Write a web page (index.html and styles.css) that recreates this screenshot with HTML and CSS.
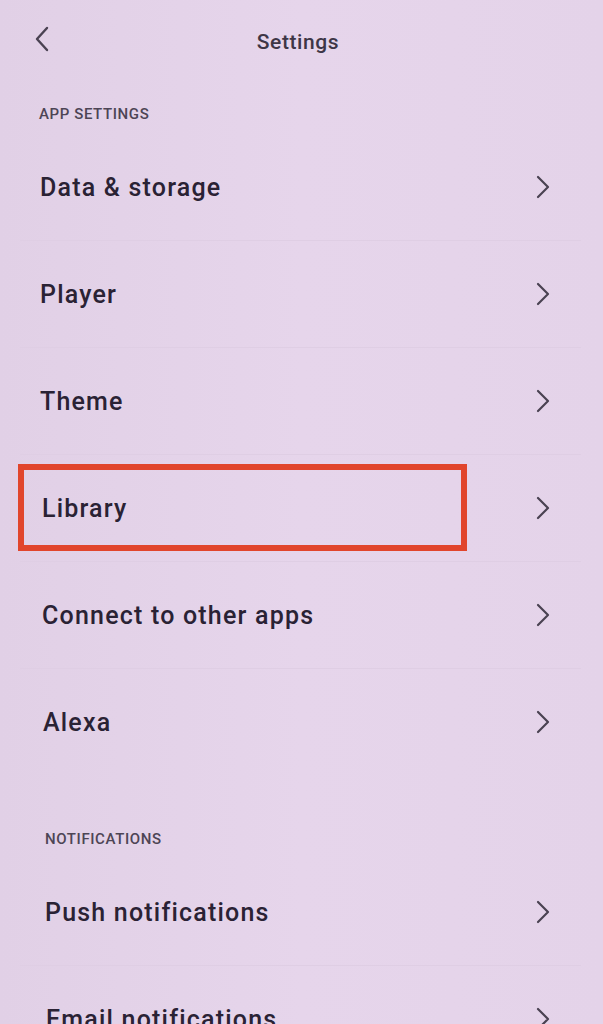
FILE: index.html
```html
<!DOCTYPE html>
<html>
<head>
<meta charset="utf-8">
<link rel="stylesheet" href="styles.css">
</head>
<body>
<div class="screen">
  <header class="topbar">
    <span class="back"><svg width="16" height="26" viewBox="0 0 16 26"><path d="M13 2 L3 13 L13 24" fill="none" stroke="#4a4252" stroke-width="2.4" stroke-linecap="round" stroke-linejoin="round"/></svg></span>
    <h1 class="title">Settings</h1>
  </header>

  <div class="section-label first">APP SETTINGS</div>
  <ul class="list">
    <li class="row"><span class="label">Data &amp; storage</span><span class="chev"><svg width="14" height="24" viewBox="0 0 14 24"><path d="M2 2 L12 12 L2 22" fill="none" stroke="#4a4252" stroke-width="2.2" stroke-linecap="round" stroke-linejoin="round"/></svg></span></li>
    <li class="row"><span class="label">Player</span><span class="chev"><svg width="14" height="24" viewBox="0 0 14 24"><path d="M2 2 L12 12 L2 22" fill="none" stroke="#4a4252" stroke-width="2.2" stroke-linecap="round" stroke-linejoin="round"/></svg></span></li>
    <li class="row"><span class="label">Theme</span><span class="chev"><svg width="14" height="24" viewBox="0 0 14 24"><path d="M2 2 L12 12 L2 22" fill="none" stroke="#4a4252" stroke-width="2.2" stroke-linecap="round" stroke-linejoin="round"/></svg></span></li>
    <li class="row shift1"><span class="label">Library</span><span class="highlight-box"></span><span class="chev"><svg width="14" height="24" viewBox="0 0 14 24"><path d="M2 2 L12 12 L2 22" fill="none" stroke="#4a4252" stroke-width="2.2" stroke-linecap="round" stroke-linejoin="round"/></svg></span></li>
    <li class="row shift1"><span class="label">Connect to other apps</span><span class="chev"><svg width="14" height="24" viewBox="0 0 14 24"><path d="M2 2 L12 12 L2 22" fill="none" stroke="#4a4252" stroke-width="2.2" stroke-linecap="round" stroke-linejoin="round"/></svg></span></li>
    <li class="row shift2 last"><span class="label">Alexa</span><span class="chev"><svg width="14" height="24" viewBox="0 0 14 24"><path d="M2 2 L12 12 L2 22" fill="none" stroke="#4a4252" stroke-width="2.2" stroke-linecap="round" stroke-linejoin="round"/></svg></span></li>
  </ul>

  <div class="section-label second">NOTIFICATIONS</div>
  <ul class="list">
    <li class="row shift3"><span class="label">Push notifications</span><span class="chev"><svg width="14" height="24" viewBox="0 0 14 24"><path d="M2 2 L12 12 L2 22" fill="none" stroke="#4a4252" stroke-width="2.2" stroke-linecap="round" stroke-linejoin="round"/></svg></span></li>
    <li class="row shift4"><span class="label">Email notifications</span><span class="chev"><svg width="14" height="24" viewBox="0 0 14 24"><path d="M2 2 L12 12 L2 22" fill="none" stroke="#4a4252" stroke-width="2.2" stroke-linecap="round" stroke-linejoin="round"/></svg></span></li>
  </ul>
</div>
</body>
</html>
```

FILE: styles.css
```css
html, body {
  margin: 0;
  padding: 0;
  background: #e4d3e9;
}
body {
  font-family: Roboto, "Liberation Sans", sans-serif;
  color: #2a2234;
  overflow: hidden;
  height: 1024px;
}
.screen {
  width: 603px;
  height: 1024px;
  overflow: hidden;
  background: linear-gradient(90deg, #e1d0e6 0%, #e6d5eb 50%, #e4d3e9 100%);
}
.topbar {
  position: relative;
  height: 84px;
  display: flex;
  align-items: center;
  justify-content: center;
}
.back {
  position: absolute;
  left: 34px;
  top: 26px;
  display: flex;
}
.title {
  margin: 0 0 0 -7px;
  font-size: 21px;
  font-weight: 500;
  color: #3e3646;
  letter-spacing: 0.6px;
}
.section-label {
  font-size: 15px;
  font-weight: 500;
  color: #4d4555;
  letter-spacing: 0.6px;
}
.section-label.first {
  padding: 21px 0 0 39px;
  height: 29px;
}
.section-label.second {
  padding: 55px 0 0 45px;
  height: 29px;
}
.list {
  list-style: none;
  margin: 0;
  padding: 0 22px 0 20px;
}
.row {
  position: relative;
  height: 106px;
  display: flex;
  align-items: center;
  justify-content: space-between;
  padding: 0 31px 0 20px;
  border-bottom: 1px solid #dfcee4;
}
.row.shift1 { padding-left: 22px; }
.row.shift2 { padding-left: 23px; }
.row.shift3 { padding-left: 25px; }
.row.shift4 { padding-left: 26px; }
.row.last {
  border-bottom: none;
}
.label {
  font-size: 25px;
  font-weight: 500;
  color: #2a2234;
  letter-spacing: 1.2px;
}
.chev {
  display: flex;
}
.highlight-box {
  position: absolute;
  left: -2px;
  top: 9px;
  width: 437px;
  height: 75px;
  border: 6px solid #e1452c;
}
```
